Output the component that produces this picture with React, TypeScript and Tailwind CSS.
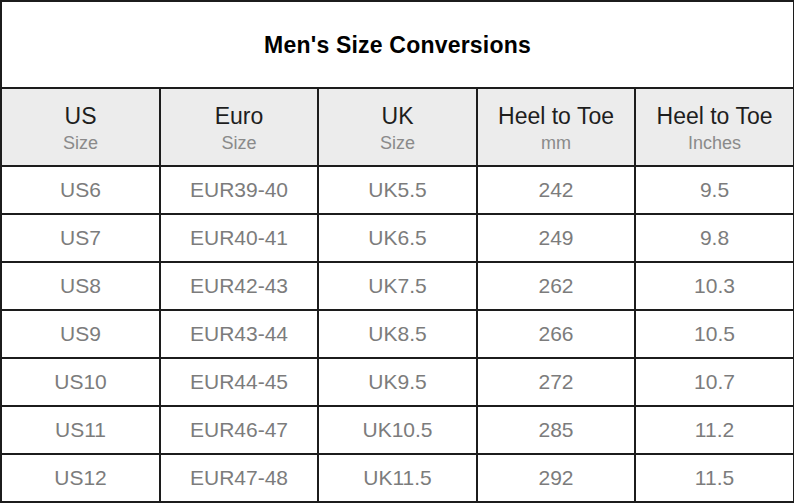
import React from 'react';

const rows = [
  ['US6', 'EUR39-40', 'UK5.5', '242', '9.5'],
  ['US7', 'EUR40-41', 'UK6.5', '249', '9.8'],
  ['US8', 'EUR42-43', 'UK7.5', '262', '10.3'],
  ['US9', 'EUR43-44', 'UK8.5', '266', '10.5'],
  ['US10', 'EUR44-45', 'UK9.5', '272', '10.7'],
  ['US11', 'EUR46-47', 'UK10.5', '285', '11.2'],
  ['US12', 'EUR47-48', 'UK11.5', '292', '11.5'],
];

const headers = [
  ['US', 'Size'],
  ['Euro', 'Size'],
  ['UK', 'Size'],
  ['Heel to Toe', 'mm'],
  ['Heel to Toe', 'Inches'],
];

const cell = 'border-2 border-[#1c1c1c] p-0 text-center';

export default function App() {
  return (
    <div className="w-[794px] h-[503px] bg-white overflow-hidden font-['Liberation_Sans',Arial,sans-serif]">
      <table className="w-[793px] table-fixed border-collapse">
        <colgroup>
          <col className="w-[159px]" />
          <col className="w-[158px]" />
          <col className="w-[159px]" />
          <col className="w-[158px]" />
          <col className="w-[159px]" />
        </colgroup>
        <tbody>
          <tr className="h-[1px]">
            {headers.map((_, i) => (
              <td key={i} className="border-x-2 border-b-2 border-[#1c1c1c] p-0 h-[1px]" />
            ))}
          </tr>
          <tr>
            <td colSpan={5} className={`${cell} h-[87px] pt-[2px] text-[23px] tracking-[0.2px] font-bold text-black`}>
              Men's Size Conversions
            </td>
          </tr>
          <tr className="bg-[#ececec]">
            {headers.map(([main, sub], i) => (
              <td key={i} className={`${cell} h-[78px]`}>
                <div className="text-[23px] leading-[25px] text-[#1e1e1e] pt-[4px]">{main}</div>
                <div className="text-[18px] leading-[24px] text-[#8a8a8a] pt-[2px]">{sub}</div>
              </td>
            ))}
          </tr>
          {rows.map((r, ri) => (
            <tr key={ri}>
              {r.map((v, ci) => (
                <td key={ci} className={`${cell} h-[48px] text-[21px] text-[#7c7c7c]`}>
                  {v}
                </td>
              ))}
            </tr>
          ))}
        </tbody>
      </table>
    </div>
  );
}
